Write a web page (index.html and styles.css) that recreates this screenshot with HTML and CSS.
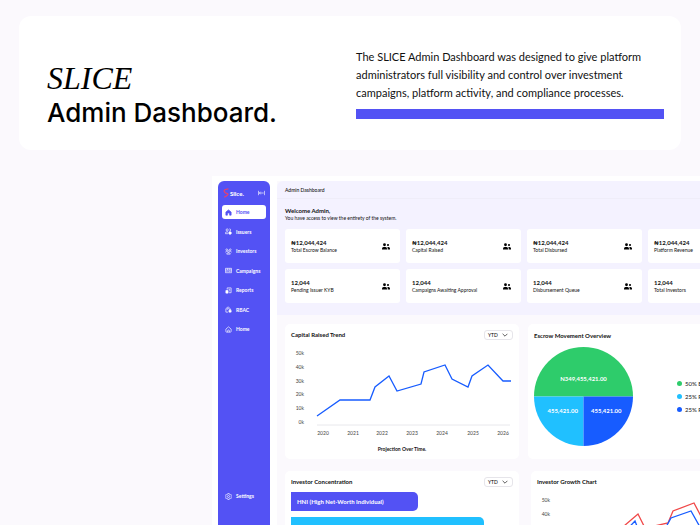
FILE: index.html
```html
<!DOCTYPE html>
<html lang="en">
<head>
  <meta charset="UTF-8">
  <meta name="viewport" content="width=device-width, initial-scale=1.0">
  <title>SLICE Admin Dashboard</title>
  <link rel="stylesheet" href="styles.css">
</head>
<body>
  <svg class="sprite" aria-hidden="true">
    <symbol id="people" viewBox="0 0 16 14">
      <circle cx="5" cy="3.5" r="2.8"/>
      <path d="M0 13V11q0-3 3-3h4q3 0 3 3v2z"/>
      <circle cx="12" cy="4" r="2.1"/>
      <path d="M11.3 13V10.500q0-1.500-.8-2.500H13q3 0 3 3v2z"/>
    </symbol>
    <symbol id="chevron" viewBox="0 0 10 6">
      <path d="M1 1l4 4 4-4" fill="none" stroke="#333" stroke-width="1.300"/>
    </symbol>
    <symbol id="home" viewBox="0 0 16 16">
      <path d="M2 7l6-5 6 5v5.500q0 1.500-1.500 1.500h-9Q2 14 2 12.500z"/>
      <path d="M6 14v-3q0-2 2-2t2 2v3"/>
    </symbol>
  </svg>

  <header class="hero">
    <h1><span class="brand">SLICE</span>Admin Dashboard.</h1>
    <div class="intro">
      <p>The SLICE Admin Dashboard was designed to give platform administrators full visibility and control over investment campaigns, platform activity, and compliance processes.</p>
      <div class="line"></div>
    </div>
  </header>

  <div class="dashboard">
    <aside class="sidebar">
      <div class="logo">
        <svg class="mark" viewBox="0 0 10 16"><path d="M9 1Q1 2 2 5t5 4-5 6" fill="none" stroke="#e8406c" stroke-width="2"/></svg>
        <span>Slice.</span>
        <button class="collapse" aria-label="Collapse menu">
          <svg viewBox="0 0 16 12"><path d="M1 1v10M15 1v10M3 6h10M6 3L3 6l3 3"/></svg>
        </button>
      </div>
      <nav>
        <a href="#" class="active"><svg viewBox="0 0 16 16"><path class="solid" d="M2 7l6-5 6 5v7h-3.500v-3q0-2-2.500-2t-2.500 2v3H2z"/></svg>Home</a>
        <a href="#"><svg viewBox="0 0 16 16"><circle cx="5" cy="4.500" r="2.500"/><path d="M1 13v-1.500Q1 9 4 9h3M10 2q3 0 3 2.500T10 7M1 13h6"/><circle class="solid" cx="11.500" cy="11.500" r="3"/></svg>Issuers</a>
        <a href="#"><svg viewBox="0 0 16 16"><circle cx="4" cy="4" r="2"/><circle cx="12" cy="4" r="2"/><circle cx="8" cy="8" r="2"/><path d="M1 10q0-2 3-2M15 10q0-2-3-2M4 14v-1q0-2 4-2t4 2v1z"/></svg>Investors</a>
        <a href="#"><svg viewBox="0 0 16 16"><path d="M1 3h14v10H1zM1 7h14M3 10h3M8 10h5M6 3v4M11 3v4"/></svg>Campaigns</a>
        <a href="#"><svg viewBox="0 0 16 16"><path d="M5 6V2h9v11H9"/><path class="solid" d="M2 8h5v6H2z"/><path d="M8 5h3v5"/></svg>Reports</a>
        <a href="#"><svg viewBox="0 0 16 16"><path d="M7 14H2V6l5-4 5 4v2M5 9V6h4"/><path class="solid" d="M9 10h5v4H9z"/><path d="M10 10V8h3v2"/></svg>RBAC</a>
        <a href="#"><svg><use href="#home"/></svg>Home</a>
      </nav>
      <a href="#" class="settings"><svg viewBox="0 0 16 16"><path d="M6.500 1h3l.5 2 2 1 2-.5 1.500 2.500-1.500 2 1.500 2-1.500 2.500-2-.5-2 1-.5 2h-3L6 13l-2-1-2 .5L.5 10 2 8 .5 6 2 3.500l2 .5 2-1z"/><circle cx="8" cy="8" r="2.300"/></svg>Settings</a>
    </aside>

    <main>
      <section class="overview">
        <div class="topbar">Admin Dashboard</div>
        <div class="welcome">
          <h2>Welcome Admin,</h2>
          <p>You have access to view the entirety of the system.</p>
        </div>
        <div class="stats">
          <div class="stat"><div><strong>₦12,044,424</strong><span>Total Escrow Balance</span></div><svg><use href="#people"/></svg></div>
          <div class="stat"><div><strong>₦12,044,424</strong><span>Capital Raised</span></div><svg><use href="#people"/></svg></div>
          <div class="stat"><div><strong>₦12,044,424</strong><span>Total Disbursed</span></div><svg><use href="#people"/></svg></div>
          <div class="stat"><div><strong>₦12,044,424</strong><span>Platform Revenue</span></div><svg><use href="#people"/></svg></div>
          <div class="stat"><div><strong>12,044</strong><span>Pending Issuer KYB</span></div><svg><use href="#people"/></svg></div>
          <div class="stat"><div><strong>12,044</strong><span>Campaigns Awaiting Approval</span></div><svg><use href="#people"/></svg></div>
          <div class="stat"><div><strong>12,044</strong><span>Disbursement Queue</span></div><svg><use href="#people"/></svg></div>
          <div class="stat"><div><strong>12,044</strong><span>Total Investors</span></div><svg><use href="#people"/></svg></div>
        </div>
      </section>

      <section class="panels">
        <article class="panel trend">
          <div class="panel-head">
            <h3>Capital Raised Trend</h3>
            <button class="period">YTD <svg><use href="#chevron"/></svg></button>
          </div>
          <svg class="line-chart" viewBox="0 0 222 94">
            <g class="y-labels">
              <text x="13" y="10">50k</text>
              <text x="13" y="24">40k</text>
              <text x="13" y="38">30k</text>
              <text x="13" y="51">20k</text>
              <text x="13" y="65">10k</text>
              <text x="13" y="79">0k</text>
            </g>
            <path class="axis" d="M26 80H219"/>
            <polyline class="blue" points="26,71 49,55 79,55 84,42 98,31 106,46 130,39 133,27 154,20 161,34 177,42 181,31 197,20 212,36 220,36"/>
            <g class="x-labels">
              <text x="32" y="90">2020</text>
              <text x="62" y="90">2021</text>
              <text x="91" y="90">2022</text>
              <text x="121" y="90">2023</text>
              <text x="151" y="90">2024</text>
              <text x="182" y="90">2025</text>
              <text x="212" y="90">2026</text>
            </g>
          </svg>
          <p class="caption">Projection Over Time.</p>
        </article>

        <article class="panel escrow">
          <h3>Escrow Movement Overview</h3>
          <div class="pie-row">
            <svg class="pie" viewBox="0 0 100 100">
              <path d="M0 50a50 50 0 0 1 100 0z" fill="#2ecc6b"/>
              <path d="M0 50a50 50 0 0 0 50 50V50z" fill="#20c0ff"/>
              <path d="M50 100a50 50 0 0 0 50-50H50z" fill="#175cff"/>
              <text x="50" y="34">N349,455,421.00</text>
              <text x="29" y="67">455,421.00</text>
              <text x="73" y="67">455,421.00</text>
            </svg>
            <ul class="legend">
              <li class="green">50% Escrow</li>
              <li class="cyan">25% Released</li>
              <li class="royal">25% Refunded</li>
            </ul>
          </div>
        </article>

        <article class="panel">
          <div class="panel-head">
            <h3>Investor Concentration</h3>
            <button class="period">YTD <svg><use href="#chevron"/></svg></button>
          </div>
          <div class="bars">
            <div class="bar hni">HNI (High Net-Worth Individual)</div>
            <div class="bar retail">Retail Investors</div>
          </div>
        </article>

        <article class="panel growth">
          <h3>Investor Growth Chart</h3>
          <svg class="line-chart" viewBox="0 0 222 94">
            <g class="y-labels">
              <text x="13" y="10">50k</text>
              <text x="13" y="24">40k</text>
              <text x="13" y="38">30k</text>
              <text x="13" y="51">20k</text>
            </g>
            <polyline class="red" points="26,64 50,50 80,40 101,22 108,36 131,31 136,19 157,11 166,28 180,36"/>
            <polyline class="blue" points="26,71 49,58 82,46 98,29 103,42 129,35 134,26 154,19 163,35 180,42"/>
          </svg>
        </article>
      </section>
    </main>
  </div>
</body>
</html>
```
FILE: styles.css
```css
* {
  box-sizing: border-box;
}

body {
  margin: 0;
  height: 100vh;
  overflow: hidden;
  background: #fbf9fd;
  color: #111;
  font-family: Lato, sans-serif;
}

h1, h2, h3, p, ul {
  margin: 0;
  padding: 0;
}

button {
  font: inherit;
  cursor: pointer;
}

.sprite {
  display: none;
}

/* Header card */
.hero {
  display: grid;
  grid-template-columns: 309px 1fr;
  margin: 16px 19px 0;
  padding: 32px 17px 18px 28px;
  background: #fff;
  border-radius: 12px;
}

.hero h1 {
  padding-top: 14px;
  color: #000;
  font-family: Inter, sans-serif;
  font-size: 26px;
  font-weight: 500;
  line-height: 38px;
  white-space: nowrap;
}

.brand {
  display: block;
  font-family: "Liberation Serif", serif;
  font-size: 32px;
  font-style: italic;
  font-weight: 400;
  line-height: 32px;
}

.intro p {
  font-size: 11px;
  line-height: 18px;
}

.line {
  height: 10px;
  margin-top: 7px;
  background: #5352f4;
}

/* Dashboard frame, runs past the right edge */
.dashboard {
  display: flex;
  gap: 7px;
  width: max-content;
  height: 400px;
  margin: 26px 0 0 212px;
  padding: 5px 6px 0;
  background: #fff;
}

.sidebar {
  display: flex;
  flex-direction: column;
  width: 52px;
  padding: 6px 4px 0;
  background: #5352f4;
  border-radius: 6px 6px 0 0;
  color: #fff;
}

.logo {
  display: flex;
  align-items: center;
  gap: 1px;
  height: 12px;
  padding-left: 1px;
  font-size: 6px;
  font-weight: 900;
}

.mark {
  width: 6px;
  height: 10px;
}

.collapse {
  width: 7px;
  height: 6px;
  margin: 0 1px 0 auto;
  padding: 0;
  border: 0;
  background: none;
  line-height: 0;
}

.collapse svg {
  width: 7px;
  height: 6px;
}

.sidebar svg {
  fill: none;
  stroke: #fff;
  stroke-width: 1.5;
}

.sidebar nav {
  display: flex;
  flex-direction: column;
  justify-content: space-between;
  height: 131px;
  margin-top: 6px;
}

.sidebar a {
  display: flex;
  align-items: center;
  gap: 4px;
  height: 14px;
  padding-left: 3px;
  border-radius: 3px;
  color: #fff;
  font-size: 5px;
  font-weight: 700;
  text-decoration: none;
}

.sidebar a svg {
  width: 7px;
  height: 7px;
}

.sidebar .solid {
  fill: #fff;
}

.sidebar a.active {
  background: #fff;
  color: #5352f4;
}

.sidebar .active .solid {
  fill: #5352f4;
  stroke: #5352f4;
}

.sidebar .settings {
  margin: 153px 0 0;
}

/* Overview */
main {
  background: #fbf9fd;
}

.overview {
  height: 134px;
  background: #f4f2ff;
  border-radius: 6px 0 0 0;
}

.topbar {
  height: 18px;
  padding: 0 8px;
  border-bottom: 1px solid #efedf9;
  font-size: 5px;
  font-weight: 500;
  line-height: 18px;
}

.welcome {
  padding: 8px 8px 7px;
}

.welcome h2 {
  font-size: 6px;
  line-height: 8px;
}

.welcome p {
  font-size: 5px;
  line-height: 7px;
}

.stats {
  display: grid;
  grid-template-columns: repeat(4, 115px);
  gap: 6px;
  padding: 0 8px;
}

.stat {
  display: flex;
  align-items: center;
  justify-content: space-between;
  height: 34px;
  padding: 0 10px 0 6px;
  background: #fff;
  border-radius: 3px;
}

.stat strong,
.stat span {
  display: block;
  font-size: 5px;
  line-height: 7px;
}

.stat strong {
  font-size: 6px;
  line-height: 8px;
}

.stat svg {
  width: 8px;
  height: 7px;
}

/* Chart panels */
.panels {
  display: grid;
  grid-template-columns: 234px 234px;
  gap: 12px 9px;
  padding: 9px 8px;
}

.panel {
  height: 135px;
  padding: 6px;
  background: #fff;
  border-radius: 5px;
}

.panel h3 {
  font-size: 6px;
  line-height: 10px;
}

.panel-head {
  display: flex;
  align-items: center;
  justify-content: space-between;
}

.period {
  display: flex;
  align-items: center;
  justify-content: space-between;
  width: 29px;
  height: 10px;
  padding: 0 4px 0 3px;
  border: 1px solid #e6e5ea;
  border-radius: 3px;
  background: #fff;
  font-size: 5px;
}

.period svg {
  width: 6px;
  height: 4px;
}

.line-chart {
  display: block;
  width: 222px;
  height: 94px;
  margin-top: 5px;
  font-size: 5px;
  fill: #444;
}

.y-labels {
  text-anchor: end;
}

.x-labels {
  text-anchor: middle;
}

.axis {
  stroke: #e8e8ec;
}

.line-chart polyline {
  fill: none;
  stroke-width: 1.3;
}

.blue {
  stroke: #175cff;
}

.red {
  stroke: #f04848;
}

.caption {
  margin-top: 6px;
  font-size: 5px;
  font-weight: 700;
  line-height: 8px;
  text-align: center;
}

.escrow {
  padding-top: 7px;
}

.pie-row {
  display: flex;
  align-items: center;
  gap: 44px;
  margin-top: 6px;
}

.pie {
  width: 99px;
  height: 99px;
  fill: #fff;
  font-size: 6px;
  font-weight: 700;
  text-anchor: middle;
}

.legend {
  display: grid;
  gap: 5px;
  list-style: none;
  font-size: 6px;
  line-height: 8px;
  white-space: nowrap;
}

.legend li {
  display: flex;
  align-items: center;
  gap: 3px;
}

.legend li::before {
  content: "";
  width: 5px;
  height: 5px;
  border-radius: 50%;
  background: #2ecc6b;
}

.legend .cyan::before {
  background: #20c0ff;
}

.legend .royal::before {
  background: #175cff;
}

.bars {
  display: grid;
  gap: 6px;
  margin-top: 5px;
}

.bar {
  height: 19px;
  padding-left: 6px;
  border-radius: 0 5px 5px 0;
  color: #fff;
  font-size: 6px;
  font-weight: 700;
  line-height: 19px;
}

.hni {
  width: 57%;
  background: #5352f4;
}

.retail {
  width: 87%;
  background: #20c0ff;
}

.growth {
  margin-left: 3px;
}
```
